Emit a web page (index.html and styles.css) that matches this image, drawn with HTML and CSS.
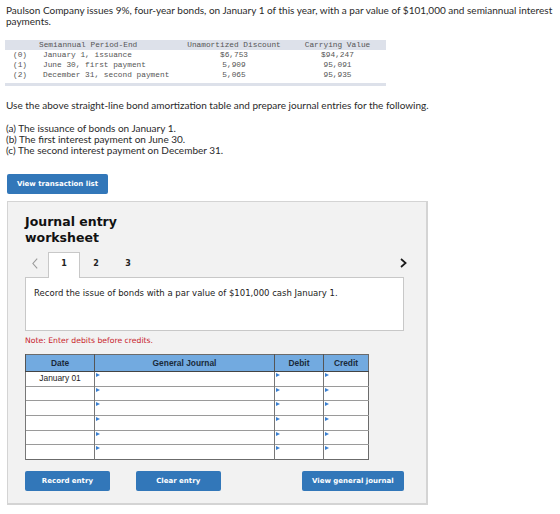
FILE: index.html
```html
<!DOCTYPE html>
<html>
<head>
<meta charset="utf-8">
<link rel="stylesheet" href="styles.css">
</head>
<body>
<p class="intro">Paulson Company issues 9%, four-year bonds, on January 1 of this year, with a par value of $101,000 and semiannual interest payments.</p>

<table class="amort">
  <thead>
    <tr><th class="c-num"></th><th class="c-per">Semiannual Period-End</th><th class="c-disc">Unamortized Discount</th><th class="c-carry">Carrying Value</th></tr>
  </thead>
  <tbody>
    <tr><td class="c-num">(0)</td><td class="c-per">January 1, issuance</td><td class="c-disc">$6,753</td><td class="c-carry">$94,247</td></tr>
    <tr><td class="c-num">(1)</td><td class="c-per">June 30, first payment</td><td class="c-disc">5,909</td><td class="c-carry">95,091</td></tr>
    <tr><td class="c-num">(2)</td><td class="c-per">December 31, second payment</td><td class="c-disc">5,065</td><td class="c-carry">95,935</td></tr>
  </tbody>
</table>

<p class="instr">Use the above straight-line bond amortization table and prepare journal entries for the following.</p>
<ul class="tasks">
  <li>(a) The issuance of bonds on January 1.</li>
  <li>(b) The first interest payment on June 30.</li>
  <li>(c) The second interest payment on December 31.</li>
</ul>

<button class="btn btn-list">View transaction list</button>

<section class="worksheet">
  <h2 class="ws-title">Journal entry<br>worksheet</h2>
  <div class="tabs">
    <span class="arrow prev"><svg width="6" height="11" viewBox="0 0 6 11"><path d="M5.2 0.6 L0.9 5.5 L5.2 10.4" fill="none" stroke="#9a9a9a" stroke-width="1.1"/></svg></span>
    <span class="tab active">1</span>
    <span class="tab">2</span>
    <span class="tab">3</span>
    <span class="arrow next"><svg width="7" height="10" viewBox="0 0 7 10"><path d="M1 1 L5.6 5 L1 9" fill="none" stroke="#1a1a1a" stroke-width="1.7"/></svg></span>
  </div>
  <div class="desc">Record the issue of bonds with a par value of $101,000 cash January 1.</div>
  <p class="note">Note: Enter debits before credits.</p>

  <table class="journal">
    <thead>
      <tr><th class="j-date">Date</th><th class="j-acct">General Journal</th><th class="j-dr">Debit</th><th class="j-cr">Credit</th></tr>
    </thead>
    <tbody>
      <tr><td class="j-date">January 01</td><td class="j-acct"><i class="mark"></i></td><td class="j-dr"><i class="mark"></i></td><td class="j-cr"><i class="mark"></i></td></tr>
      <tr><td class="j-date"></td><td class="j-acct"><i class="mark"></i></td><td class="j-dr"><i class="mark"></i></td><td class="j-cr"><i class="mark"></i></td></tr>
      <tr><td class="j-date"></td><td class="j-acct"><i class="mark"></i></td><td class="j-dr"><i class="mark"></i></td><td class="j-cr"><i class="mark"></i></td></tr>
      <tr><td class="j-date"></td><td class="j-acct"><i class="mark"></i></td><td class="j-dr"><i class="mark"></i></td><td class="j-cr"><i class="mark"></i></td></tr>
      <tr><td class="j-date"></td><td class="j-acct"><i class="mark"></i></td><td class="j-dr"><i class="mark"></i></td><td class="j-cr"><i class="mark"></i></td></tr>
      <tr><td class="j-date"></td><td class="j-acct"><i class="mark"></i></td><td class="j-dr"><i class="mark"></i></td><td class="j-cr"><i class="mark"></i></td></tr>
    </tbody>
  </table>

  <div class="actions">
    <button class="btn btn-act">Record entry</button>
    <button class="btn btn-act btn-clear">Clear entry</button>
    <button class="btn btn-act btn-view">View general journal</button>
  </div>
</section>
</body>
</html>
```

FILE: styles.css
```css
html, body {
  margin: 0;
  padding: 0;
  background: #fff;
}

body {
  padding: 5px 0 0 0;
  font-family: "Lato", "Open Sans", sans-serif;
  color: #2a2a2a;
}

.intro {
  margin: 0 0 0 6px;
  width: 552px;
  font-size: 10px;
  line-height: 11px;
}

/* amortization schedule */
.amort {
  margin: 13px 0 0 5px;
  width: 381px;
  border-collapse: collapse;
  font-family: "Liberation Mono", "Courier New", monospace;
  font-size: 7.8px;
  color: #555;
  border-bottom: 3px solid #dde1ea;
}
.amort th {
  background: #dde1ea;
  font-weight: normal;
  height: 10px;
  padding: 0;
  line-height: 10px;
}
.amort td {
  padding: 0;
  height: 10px;
  line-height: 10px;
}
.amort tbody tr:last-child td {
  padding-bottom: 3px;
}
.amort .c-num { width: 34px; text-align: left; padding-left: 8px; box-sizing: border-box; }
.amort .c-per { width: 136px; text-align: left; }
.amort td.c-per { padding-left: 4px; }
.amort .c-disc { width: 110px; text-align: center; }
.amort .c-carry { text-align: center; }

.instr {
  margin: 14px 0 0 6px;
  font-size: 10px;
  line-height: 11px;
}

.tasks {
  list-style: none;
  margin: 12px 0 0 6px;
  padding: 0;
  font-size: 10px;
  line-height: 11px;
}

.btn {
  border: 0;
  border-radius: 2px;
  background: #3277b9;
  color: #fff;
  font-family: "DejaVu Sans", Verdana, sans-serif;
  font-weight: bold;
  font-size: 7px;
  padding: 0;
  cursor: pointer;
}

.btn-list {
  display: block;
  margin: 18px 0 0 7px;
  width: 101px;
  height: 20px;
}

/* worksheet panel */
.worksheet {
  margin: 7px 0 0 7px;
  width: 421px;
  height: 304px;
  box-sizing: border-box;
  background: #f2f2f2;
  border: 1px solid #d4d4d4;
  border-right-width: 2px;
  border-bottom-width: 2px;
  padding: 12px 22px 0 17px;
  font-family: "DejaVu Sans", Verdana, sans-serif;
}

.ws-title {
  margin: 0;
  font-size: 12.5px;
  line-height: 16px;
  font-weight: bold;
  color: #111;
}

.tabs {
  display: flex;
  align-items: stretch;
  height: 25px;
  margin-top: 6px;
  position: relative;
  z-index: 1;
}
.tabs .arrow {
  display: flex;
  justify-content: center;
  padding-top: 6px;
  box-sizing: border-box;
}
.tabs .prev { width: 23px; padding-right: 3px; }
.tabs .next {
  margin-left: auto;
  margin-right: -3px;
  width: 7px;
  padding-top: 6px;
}
.tab {
  width: 32px;
  box-sizing: border-box;
  text-align: center;
  font-size: 8px;
  font-weight: bold;
  line-height: 22px;
  color: #222;
  border: 1px solid transparent;
  border-bottom: 0;
}
.tab.active {
  background: #fff;
  border-color: #c8c8c8;
  margin-bottom: -1px;
}

.desc {
  height: 54px;
  box-sizing: border-box;
  background: #fff;
  border: 1px solid #c8c8c8;
  padding: 10px 8px;
  font-size: 8.5px;
  color: #222;
}

.note {
  margin: 5px 0 0 0;
  font-size: 7.7px;
  line-height: 10px;
  color: #c8232c;
}

/* journal grid */
.journal {
  margin-top: 8px;
  width: 344px;
  border-collapse: collapse;
  font-family: "Liberation Sans", Arial, sans-serif;
  font-size: 8.4px;
  border: 1.5px solid #6b6b6b;
}
.journal th {
  background: #72aae0;
  color: #1a2a3a;
  font-weight: bold;
  height: 16px;
  padding: 0;
  border-left: 1.5px solid #555;
  border-bottom: 1.5px solid #444;
}
.journal td {
  background: #fff;
  height: 13.7px;
  padding: 0;
  border-top: 1.5px solid #9a9a9a;
  border-left: 1.5px solid #777;
  position: relative;
  vertical-align: top;
}
.journal td.j-date {
  text-align: center;
  line-height: 13px;
  color: #222;
}
.journal .j-date { width: 68px; }
.journal .j-acct { width: 179px; }
.journal .j-dr { width: 48px; }

.mark {
  position: absolute;
  left: 1px;
  top: 1px;
  width: 0;
  height: 0;
  border-top: 2.5px solid transparent;
  border-bottom: 2.5px solid transparent;
  border-left: 4px solid #3a7fd0;
}

.actions {
  display: flex;
  margin-top: 11px;
}
.btn-act {
  width: 87px;
  height: 20px;
}
.btn-clear { margin-left: 26px; }
.btn-view { margin-left: 81px; width: 105px; }
```
